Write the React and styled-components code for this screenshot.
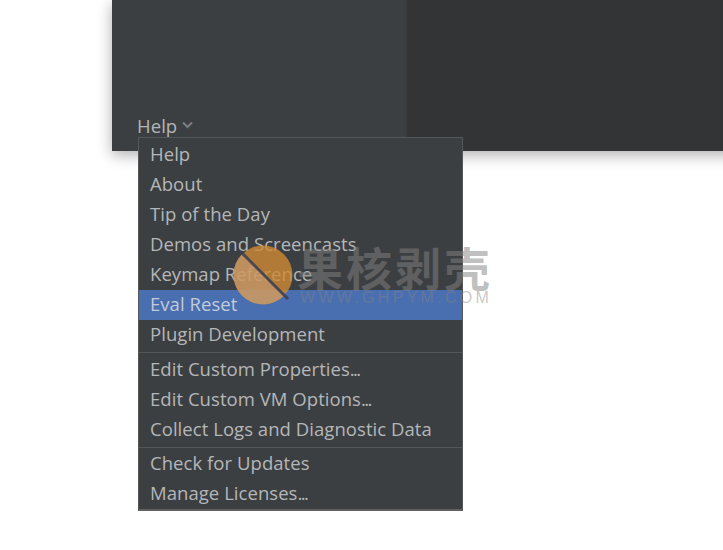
import React from "react"
import styled, { createGlobalStyle } from "styled-components"

const GlobalStyle = createGlobalStyle`
  html, body {
    margin: 0;
    padding: 0;
    height: 100%;
    background: #ffffff;
    overflow: hidden;
  }
  body {
    font-family: "Open Sans", "Noto Sans", "Noto Sans CJK SC", sans-serif;
  }
`

const Page = styled.div`
  position: relative;
  width: 723px;
  height: 550px;
  padding-left: 112px;
  box-sizing: border-box;
  overflow: hidden;
`

const IdeWindow = styled.div`
  display: flex;
  width: 640px;
  height: 151px;
  box-shadow: 0 4px 14px rgba(0, 0, 0, 0.32);
`

const Sidebar = styled.div`
  width: 295px;
  display: flex;
  align-items: flex-end;
  padding: 0 0 14px 25px;
  box-sizing: border-box;
  background: #3c3f41;
  border-right: 1px solid #383a3c;
`

const HelpLink = styled.div`
  display: flex;
  align-items: center;
  gap: 5px;
  height: 24px;
  font-size: 18.5px;
  letter-spacing: 0.05px;
  color: #b3b6b8;
`

const Content = styled.div`
  flex: 1;
  background: #333436;
`

const Menu = styled.div`
  position: absolute;
  left: 138px;
  top: 137px;
  width: 325px;
  height: 374px;
  box-sizing: border-box;
  padding-top: 2px;
  background: #3c3f41;
  border: 1px solid #55585a;
  border-bottom-width: 2px;
  border-bottom-color: #5e6062;
`

const MenuItem = styled.div`
  height: 30px;
  line-height: 27px;
  padding-left: 11px;
  font-size: 18.5px;
  letter-spacing: 0.05px;
  white-space: nowrap;
  color: ${(props) => (props.active ? "#c3cad8" : "#b4b7b9")};
  background: ${(props) => (props.active ? "#4a6fb0" : "transparent")};
`

const Dots = styled.span`
  letter-spacing: -1.6px;
`

const Divider = styled.div`
  height: 1px;
  margin: 2px 0 ${(props) => props.below}px;
  background: #54575a;
`

const Watermark = styled.div`
  position: absolute;
  left: 232px;
  top: 243px;
  display: flex;
  align-items: flex-start;
  gap: 4px;
  pointer-events: none;
`

const WatermarkText = styled.div`
  display: flex;
  flex-direction: column;
`

const WatermarkTitle = styled.div`
  margin-left: -3px;
  font-family: "Noto Sans CJK SC", sans-serif;
  font-size: 46px;
  font-weight: 700;
  line-height: 46px;
  letter-spacing: 3px;
  color: rgba(130, 130, 130, 0.5);
`

const WatermarkUrl = styled.div`
  font-family: "Liberation Sans", sans-serif;
  font-size: 16px;
  line-height: 18px;
  letter-spacing: 3.3px;
  white-space: nowrap;
  color: rgba(130, 130, 130, 0.45);
`

function WatermarkLogo() {
  return (
    <svg width="64" height="66" viewBox="0 0 64 66">
      <circle cx="31" cy="32" r="29.5" fill="#d08a35" fillOpacity="0.8" />
      <path d="M1.5 32a29.5 29.5 0 0 0 51 20L11 10A29.5 29.5 0 0 0 1.5 32z" fill="#c9a890" fillOpacity="0.45" />
      <path d="M8 8L56 56" stroke="#3c3f50" strokeWidth="3" strokeOpacity="0.9" />
    </svg>
  )
}

function ChevronDown() {
  return (
    <svg width="11" height="8" viewBox="0 0 11 8">
      <path d="M1 1.5L5.5 6L10 1.5" fill="none" stroke="#7b7e80" strokeWidth="2" />
    </svg>
  )
}

const menuGroups = [
  { below: 0, items: ["Help", "About", "Tip of the Day", "Demos and Screencasts", "Keymap Reference", "Eval Reset", "Plugin Development"] },
  { below: 2, items: ["Edit Custom Properties...", "Edit Custom VM Options...", "Collect Logs and Diagnostic Data"] },
  { below: 1, items: ["Check for Updates", "Manage Licenses..."] },
]

function MenuLabel({ text }) {
  if (!text.endsWith("...")) return text
  return (
    <>
      {text.slice(0, -3)}
      <Dots>...</Dots>
    </>
  )
}

export default function App() {
  return (
    <Page>
      <GlobalStyle />
      <IdeWindow>
        <Sidebar>
          <HelpLink>
            Help
            <ChevronDown />
          </HelpLink>
        </Sidebar>
        <Content />
      </IdeWindow>
      <Menu>
        {menuGroups.map((group, index) => (
          <React.Fragment key={group.items[0]}>
            {index > 0 && <Divider below={group.below} />}
            {group.items.map((item) => (
              <MenuItem key={item} active={item === "Eval Reset"}>
                <MenuLabel text={item} />
              </MenuItem>
            ))}
          </React.Fragment>
        ))}
      </Menu>
      <Watermark>
        <WatermarkLogo />
        <WatermarkText>
          <WatermarkTitle>果核剥壳</WatermarkTitle>
          <WatermarkUrl>WWW.GHPYM.COM</WatermarkUrl>
        </WatermarkText>
      </Watermark>
    </Page>
  )
}
